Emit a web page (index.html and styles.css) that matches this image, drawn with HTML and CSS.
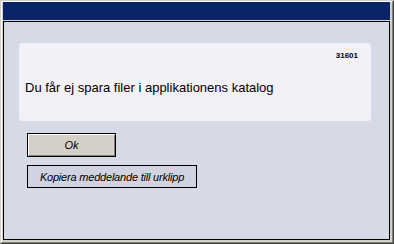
FILE: index.html
```html
<!DOCTYPE html>
<html lang="sv">
<head>
  <meta charset="UTF-8">
  <title>Meddelande</title>
  <link rel="stylesheet" href="styles.css">
</head>
<body>
  <div class="window">
    <div class="frame">
      <div class="title-bar"></div>
      <div class="content">
        <div class="message-card">
          <div class="message-code">31601</div>
          <div class="message-text">Du får ej spara filer i applikationens katalog</div>
        </div>
        <div class="actions">
          <button class="btn btn-ok">Ok</button>
          <button class="btn btn-copy">Kopiera meddelande till urklipp</button>
        </div>
      </div>
    </div>
  </div>
</body>
</html>
```

FILE: styles.css
```css
body {
  margin: 0;
  padding: 0;
  font-family: 'Liberation Sans', Arial, sans-serif;
  background-color: #d4d0c8;
}

.window {
  width: 394px;
  height: 244px;
  box-sizing: border-box;
  border: 1px solid;
  border-color: #d4d0c8 #404040 #404040 #d4d0c8;
  background-color: #d4d0c8;
}

.frame {
  height: 100%;
  box-sizing: border-box;
  border: 1px solid;
  border-color: #fff #808080 #808080 #fff;
  padding: 0 2px 2px 1px;
  display: flex;
  flex-direction: column;
}

.title-bar {
  height: 18px;
  background-color: #0a246a;
  flex-shrink: 0;
}

.content {
  flex: 1;
  margin-top: 1px;
  border: 1px solid #000;
  background-color: #d6dae6;
  padding: 21px 18px 0 15px;
}

.message-card {
  background-color: #f1f1f7;
  border-radius: 3px;
  height: 78px;
  box-sizing: border-box;
  padding: 8px 13px 0 6px;
}

.message-code {
  text-align: right;
  font-size: 8px;
  font-weight: bold;
  line-height: 10px;
  color: #000;
}

.message-text {
  margin-top: 19px;
  font-size: 13px;
  line-height: 15px;
  color: #000;
}

.actions {
  display: flex;
  flex-direction: column;
  align-items: flex-start;
  gap: 8px;
  margin: 12px 0 0 8px;
}

.btn {
  font-family: 'Liberation Sans', Arial, sans-serif;
  font-style: italic;
  font-size: 11px;
  color: #000;
  border: 1px solid #000;
  padding: 0;
  cursor: pointer;
}

.btn-ok {
  width: 89px;
  height: 24px;
  background-color: #d4d0c8;
  box-shadow: inset 1px 1px #fff, inset -1px -1px #808080;
}

.btn-copy {
  width: 170px;
  height: 23px;
  background-color: #d0d3e2;
  letter-spacing: -0.2px;
}
```
